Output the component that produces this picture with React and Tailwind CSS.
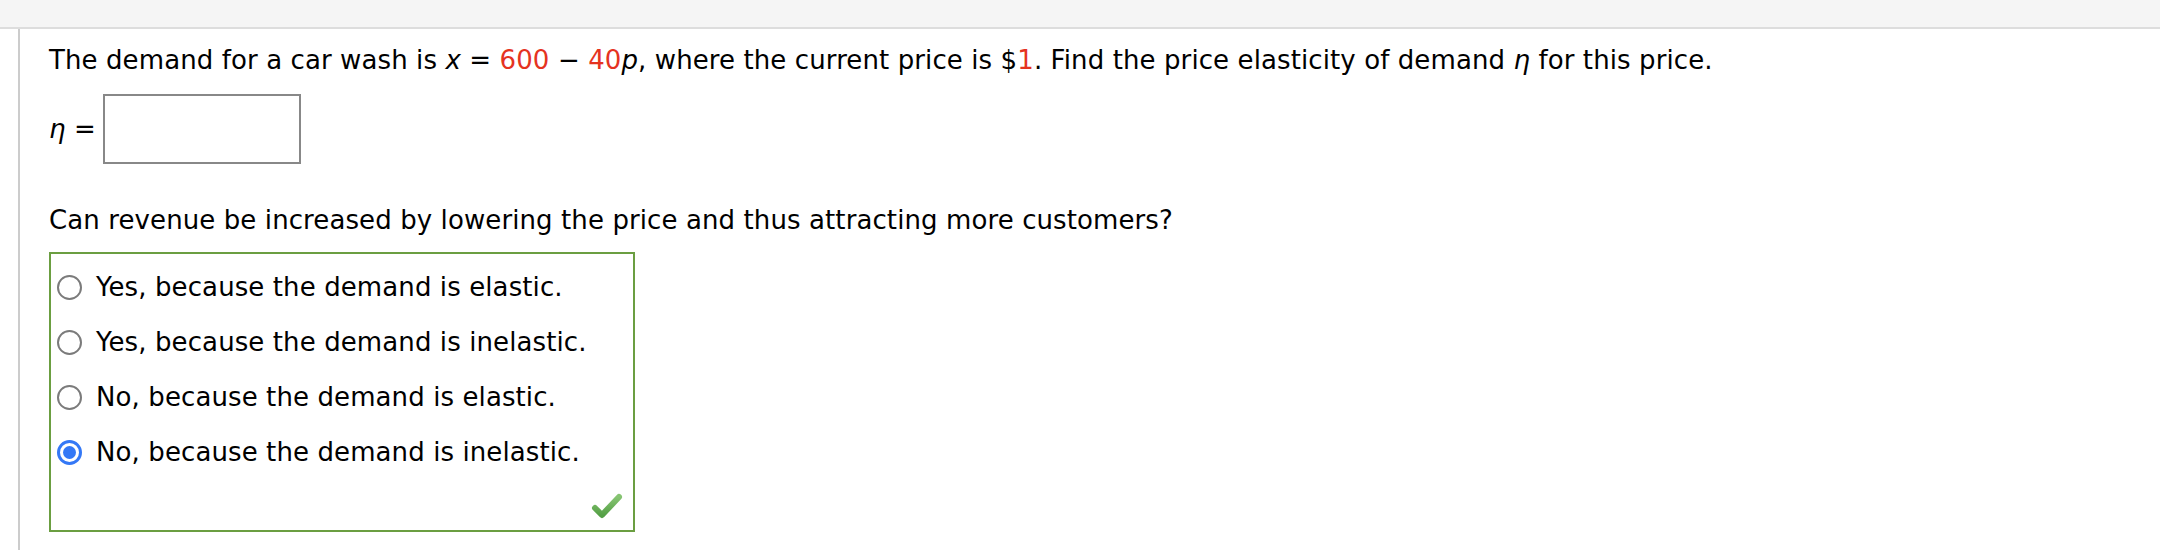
const opciones = [
    { texto: 'Yes, because the demand is elastic.', marcada: false },
    { texto: 'Yes, because the demand is inelastic.', marcada: false },
    { texto: 'No, because the demand is elastic.', marcada: false },
    { texto: 'No, because the demand is inelastic.', marcada: true },
]

function Radio({ marcada }) {
    if (marcada) {
        return (
            <span className="w-[25px] h-[25px] shrink-0 rounded-full border-[3px] border-[#3478f6] bg-white flex items-center justify-center">
                <span className="w-[13px] h-[13px] rounded-full bg-[#3478f6]" />
            </span>
        )
    }
    return <span className="w-[25px] h-[25px] shrink-0 rounded-full border-2 border-[#7b7b7b] bg-white" />
}

function Palomita() {
    return (
        <svg width="32" height="28" viewBox="0 0 32 28">
            <defs>
                <linearGradient id="verde" x1="0" y1="0" x2="0" y2="1">
                    <stop offset="0" stopColor="#86c472" />
                    <stop offset="1" stopColor="#55a046" />
                </linearGradient>
            </defs>
            <polyline points="4,16 11,23 28,5" fill="none" stroke="url(#verde)" strokeWidth="6" strokeLinecap="round" strokeLinejoin="round" />
        </svg>
    )
}

export default function App() {
    return (
        <div className="w-[2160px] h-[550px] bg-white text-black overflow-hidden" style={{ fontFamily: '"DejaVu Sans", Verdana, sans-serif' }}>
            <div className="h-[29px] bg-[#f5f5f5] border-b-2 border-[#dddddd]" />
            <div className="flex h-full">
                <div className="w-[18px] shrink-0" />
                <div className="border-l-2 border-[#cccccc] pl-[29px] pt-[15px] text-[26px] tracking-[0.1px]">
                    <p className="leading-[32px] whitespace-nowrap">
                        The demand for a car wash is <i>x</i> = <span className="text-[#e5331f]">600</span> − <span className="text-[#e5331f]">40</span><i>p</i>, where the current price is $<span className="text-[#e5331f]">1</span>. Find the price elasticity of demand <i>η</i> for this price.
                    </p>
                    <div className="mt-[18px] flex items-center gap-[7px]">
                        <span><i>η</i> =</span>
                        <div className="w-[198px] h-[70px] border-2 border-[#888888] bg-white" />
                    </div>
                    <p className="mt-[40px] leading-[32px] whitespace-nowrap">
                        Can revenue be increased by lowering the price and thus attracting more customers?
                    </p>
                    <div className="mt-[16px] w-[586px] border-2 border-[#6b9e41] pt-[6px] pb-[10px]">
                        {opciones.map((o) => (
                            <label key={o.texto} className="h-[55px] flex items-center gap-[14px] pl-[6px]">
                                <Radio marcada={o.marcada} />
                                <span className="whitespace-nowrap">{o.texto}</span>
                            </label>
                        ))}
                        <div className="mt-[12px] flex justify-end pr-[10px]">
                            <Palomita />
                        </div>
                    </div>
                </div>
            </div>
        </div>
    )
}
